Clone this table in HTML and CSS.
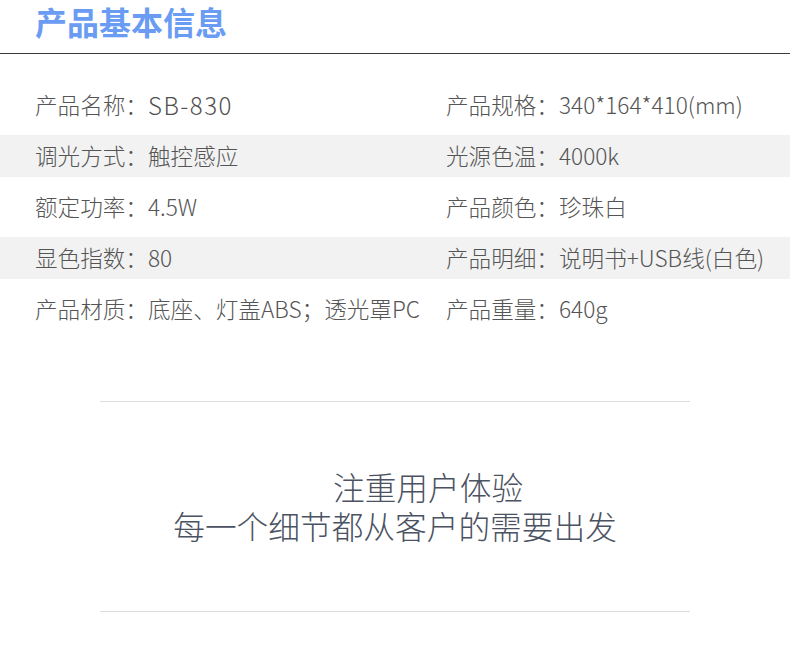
FILE: index.html
```html
<!DOCTYPE html>
<html lang="zh-CN">
<head>
<meta charset="utf-8">
<title>产品基本信息</title>
<link rel="stylesheet" href="styles.css">
</head>
<body>
<div class="page">
  <h1 class="title">产品基本信息</h1>
  <div class="rule"></div>
  <div class="specs">
    <div class="row">
      <div class="cell"><span class="label">产品名称：</span><span class="value model">SB-830</span></div>
      <div class="cell"><span class="label">产品规格：</span><span class="value">340*164*410(mm)</span></div>
    </div>
    <div class="row shade">
      <div class="cell"><span class="label">调光方式：</span><span class="value">触控感应</span></div>
      <div class="cell"><span class="label">光源色温：</span><span class="value">4000k</span></div>
    </div>
    <div class="row">
      <div class="cell"><span class="label">额定功率：</span><span class="value">4.5W</span></div>
      <div class="cell"><span class="label">产品颜色：</span><span class="value">珍珠白</span></div>
    </div>
    <div class="row shade">
      <div class="cell"><span class="label">显色指数：</span><span class="value">80</span></div>
      <div class="cell"><span class="label">产品明细：</span><span class="value">说明书+USB线(白色)</span></div>
    </div>
    <div class="row">
      <div class="cell"><span class="label">产品材质：</span><span class="value">底座、灯盖ABS；透光罩PC</span></div>
      <div class="cell"><span class="label">产品重量：</span><span class="value">640g</span></div>
    </div>
  </div>
  <div class="slogan">
    <p class="line first">注重用户体验</p>
    <p class="line">每一个细节都从客户的需要出发</p>
  </div>
</div>
</body>
</html>
```
FILE: styles.css
```css
html, body {
  margin: 0;
  padding: 0;
  background: #ffffff;
}
.page {
  width: 790px;
  font-family: "Noto Sans CJK SC", "Noto Sans", sans-serif;
}
.title {
  margin: 0;
  padding: 0 0 0 35px;
  height: 53px;
  box-sizing: border-box;
  font-size: 32px;
  line-height: 42px;
  font-weight: 700;
  color: #6a9cf4;
}
.rule {
  height: 1px;
  background: #3a3a3a;
}
.specs {
  padding-top: 30px;
}
.row {
  display: grid;
  grid-template-columns: 411px auto;
  padding-left: 35px;
  height: 42px;
  align-items: center;
  margin-bottom: 9px;
  font-size: 22.6px;
  font-weight: 300;
  color: #555555;
  white-space: nowrap;
}
.row.shade {
  background: #f2f2f2;
}
.cell {
  display: flex;
  align-items: center;
  line-height: 42px;
}
.model {
  font-size: 24px;
  font-weight: 300;
  letter-spacing: 1.5px;
  color: #505050;
}
.slogan {
  margin: 71px 100px 0;
  border-top: 1px solid #dcdcdc;
  border-bottom: 1px solid #dcdcdc;
  height: 211px;
  box-sizing: border-box;
  padding-top: 65px;
  text-align: center;
  color: #4b5262;
  font-size: 31.7px;
  font-weight: 300;
}
.line {
  margin: 0;
  line-height: 39px;
}
.line.first {
  padding-left: 66px;
}
```
